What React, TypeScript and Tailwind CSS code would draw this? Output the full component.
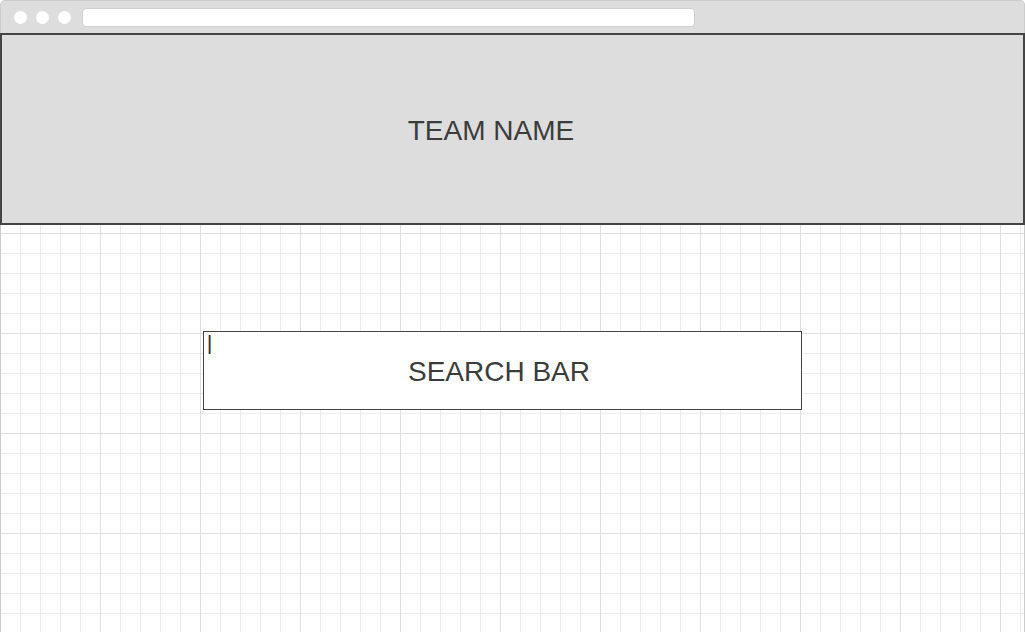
import React from 'react';

const dots = [0, 1, 2];

const BrowserChrome: React.FC = () => (
  <div className="h-[33px] shrink-0 flex items-center gap-[9px] pl-[13px] bg-[#dddddd] border-x border-t border-[#cccccc] rounded-t-[5px]">
    {dots.map((d) => (
      <span key={d} className="w-[13px] h-[13px] rounded-full bg-white" />
    ))}
    <div className="ml-[2px] w-[613px] h-[19px] rounded-[4px] bg-white border border-[#cfcfcf]" />
  </div>
);

const SearchBar: React.FC = () => (
  <div className="relative ml-[202px] mt-[106px] w-[599px] h-[79px] bg-white border border-[#444444] flex items-center justify-center pr-[7px] pt-[2px]">
    <div className="absolute left-[4px] top-[3px] flex h-[19px]">
      <span className="w-[1px] bg-[#e9b65a]" />
      <span className="w-[1px] bg-[#333333]" />
      <span className="w-[1px] bg-[#4a9fe0]" />
    </div>
    <span className="text-[28px] leading-none text-[#3c3c3c]">SEARCH BAR</span>
  </div>
);

const App: React.FC = () => {
  return (
    <div className="w-[1025px] h-[632px] flex flex-col overflow-hidden bg-white font-['Liberation_Sans',Arial,sans-serif]">
      <BrowserChrome />
      <div className="flex-1 flex flex-col border-x border-[#cccccc] bg-white bg-[linear-gradient(to_right,#dedede_1px,transparent_1px),linear-gradient(to_bottom,#dedede_1px,transparent_1px),linear-gradient(to_right,#ececec_1px,transparent_1px),linear-gradient(to_bottom,#ececec_1px,transparent_1px)] bg-[size:100px_100px,100px_100px,20px_20px,20px_20px] bg-[position:-1px_0,-1px_0,-1px_0,-1px_0]">
        <header className="-mx-px h-[192px] shrink-0 flex items-center justify-center pr-[43px] pt-[3px] bg-[#dddddd] border-2 border-[#444444]">
          <span className="text-[28px] leading-none text-[#3c3c3c]">TEAM NAME</span>
        </header>
        <SearchBar />
      </div>
    </div>
  );
};

export default App;
